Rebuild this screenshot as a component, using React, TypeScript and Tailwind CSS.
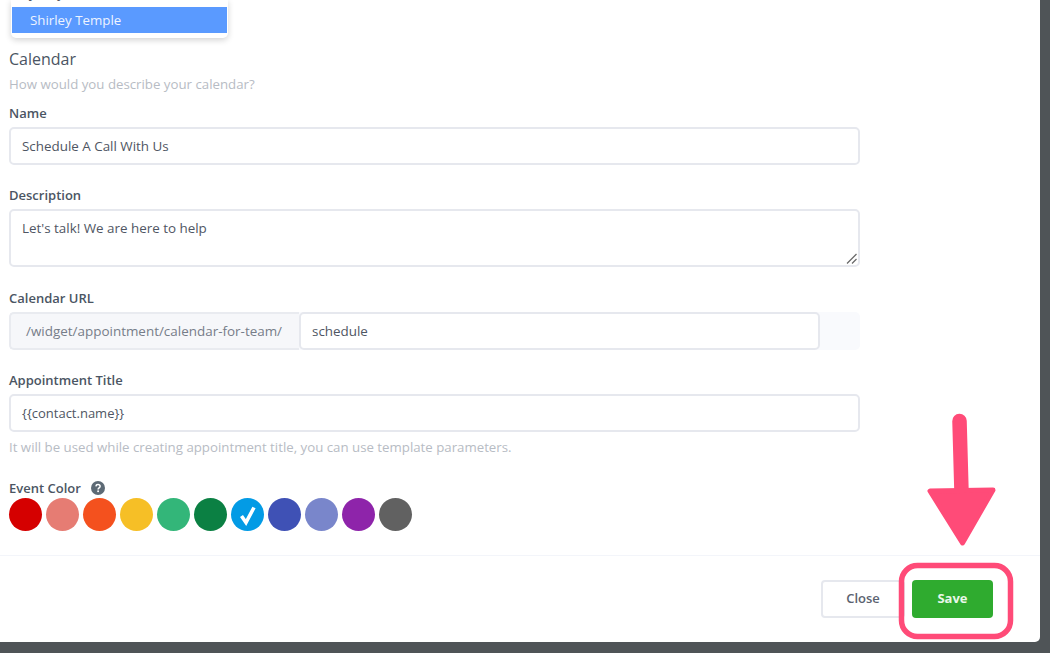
import React from "react";

const colors = ["#d50000", "#e67c73", "#f4511e", "#f6bf26", "#33b679", "#0b8043", "#039be5", "#3f51b5", "#7986cb", "#8e24aa", "#616161"];

function Label({ children, className = "" }: { children: React.ReactNode; className?: string }) {
  return <div className={`h-[20px] text-[13px] leading-[20px] font-semibold text-[#4b5563] ${className}`}>{children}</div>;
}

function Field({ children, className = "" }: { children: React.ReactNode; className?: string }) {
  return (
    <div className={`flex h-[38px] items-center rounded-[5px] border-2 border-[#e6e8ee] bg-white px-[11px] pt-px text-[13.4px] text-[#4f5663] ${className}`}>
      {children}
    </div>
  );
}

export default function App() {
  return (
    <div className="relative h-[653px] w-[1050px] overflow-hidden bg-[#4f5457] font-['Open_Sans',sans-serif]">
      <div className="flex h-[642px] w-[1040px] flex-col rounded-br-[5px] bg-white">
        <div className="h-[556px] border-b border-[#f3f5fa] px-[9px]">
          <div className="ml-[2px] h-[38px] w-[217px] overflow-hidden rounded-b-[5px] bg-white px-px shadow-[0_2px_6px_rgba(0,0,0,0.18)]">
            <div className="-mt-[20px] mb-px h-[26px] pl-[18px] text-[13.3px] leading-[26px] text-[#4f5663]">Jenny</div>
            <div className="h-[26px] bg-[#5a9aff] pl-[18px] text-[13.3px] leading-[26px] text-[#eef4ff]">Shirley Temple</div>
          </div>

          <div className="w-[851px]">
            <div className="mt-[9px] h-[24px] text-[16px] leading-[24px] text-[#4b5563]">Calendar</div>
            <div className="mt-[3px] h-[20px] text-[13.25px] leading-[20px] text-[#b7bcc4]">How would you describe your calendar?</div>
            <Label className="mt-[9px]">Name</Label>
            <Field className="mt-[4px]">Schedule A Call With Us</Field>

            <Label className="mt-[20px]">Description</Label>
            <div className="relative mt-[4px] h-[58px] rounded-[5px] border-2 border-[#e6e8ee] bg-white px-[11px] pt-[7px] text-[13.4px] leading-[20px] text-[#4f5663]">
              Let's talk! We are here to help
              <svg className="absolute bottom-0 right-0 h-[12px] w-[12px]" viewBox="0 0 12 12" fill="none" stroke="#6b6b6b" strokeWidth="1.3">
                <path d="M1 10.5 10.5 1M6 10.5 10.5 6" />
              </svg>
            </div>

            <Label className="mt-[21px]">Calendar URL</Label>
            <div className="mt-[4px] flex h-[38px] rounded-[5px] bg-[#f9fafd]">
              <div className="flex w-[290px] items-center rounded-l-[5px] border-2 border-r-0 border-[#e9ebf0] bg-[#f6f7fa] pl-[15px] pt-px text-[13.45px] text-[#767d89]">
                /widget/appointment/calendar-for-team/
              </div>
              <Field className="w-[521px]">schedule</Field>
            </div>

            <Label className="mt-[20px]">Appointment Title</Label>
            <Field className="mt-[4px] !text-[13px]">{"{{contact.name}}"}</Field>
            <div className="mt-[5px] h-[20px] text-[13.25px] leading-[20px] text-[#b7bcc4]">
              It will be used while creating appointment title, you can use template parameters.
            </div>

            <div className="mt-[21px] flex h-[20px] items-center gap-[10.5px]">
              <Label>Event Color</Label>
              <svg className="h-[14px] w-[14px]" viewBox="0 0 14 14">
                <circle cx="7" cy="7" r="7" fill="#5d6a75" />
                <path d="M4.9 5.4C5 4.2 5.9 3.6 7 3.6s2.1.7 2.1 1.8c0 1.5-2 1.5-2 3" fill="none" stroke="#fff" strokeWidth="1.5" />
                <circle cx="7.1" cy="10.3" r=".95" fill="#fff" />
              </svg>
            </div>
            <div className="flex gap-[4px]">
              {colors.map((c, i) => (
                <div key={c} className="flex h-[33px] w-[33px] items-center justify-center rounded-full" style={{ backgroundColor: c }}>
                  {i === 6 && (
                    <svg className="h-[24px] w-[24px]" viewBox="0 0 24 24" fill="none" stroke="#fff" strokeWidth="3.6">
                      <path d="M5.5 13 10 19.5 18 4.5" />
                    </svg>
                  )}
                </div>
              ))}
            </div>
          </div>
        </div>

        <div className="flex flex-1 items-start justify-end pr-[47px] pt-[24px]">
          <button className="mr-[7px] h-[38px] w-[84px] rounded-[4px] border-2 border-[#e6e8ee] bg-white text-[13px] font-semibold text-[#5b6270]">Close</button>
          <button className="h-[38px] w-[81px] rounded-[4px] bg-[#2fab2f] text-[13px] font-bold text-[#e9f7e9]">Save</button>
        </div>
      </div>

      <svg className="pointer-events-none absolute left-0 top-0 h-[653px] w-[1050px]" viewBox="0 0 1050 653" fill="none">
        <rect x="901.5" y="565.5" width="109" height="71" rx="16" stroke="#ff4b78" strokeWidth="5.5" />
        <path d="M959.5 421 961.5 492" stroke="#ff4b78" strokeWidth="14.5" strokeLinecap="round" />
        <path d="M930 491 993 490 962.5 543Z" fill="#ff4b78" stroke="#ff4b78" strokeWidth="5" strokeLinejoin="round" />
      </svg>
    </div>
  );
}
